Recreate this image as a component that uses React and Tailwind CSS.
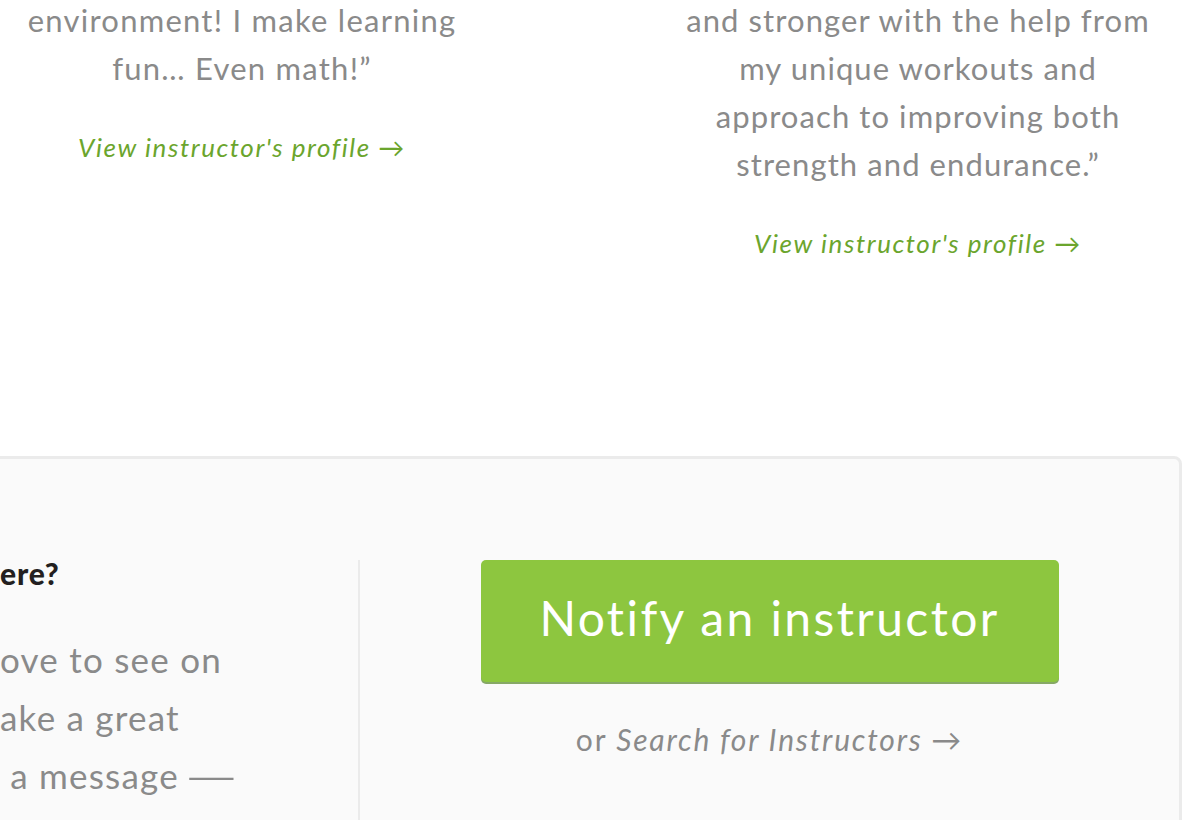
export default function App() {
  const Cut = ({ pre, post }) => (
    <div className="flex whitespace-nowrap">
      <span className="flex w-[97px] shrink-0 justify-end">
        <span>{pre}</span>
      </span>
      <span>{post}</span>
    </div>
  );
  return (
    <div className="w-[1194px] h-[820px] overflow-hidden bg-white font-['Lato',sans-serif] tracking-[0.05em]">
      <div className="flex items-start -mt-[4px]">
        <div className="w-[484px] shrink-0 text-center">
          <p className="text-[31px] leading-[48px] tracking-[0.04em] text-[#8a8a8a] whitespace-nowrap">
            environment! I make learning
            <br />
            fun… Even math!”
          </p>
          <a className="block mt-[39px] italic text-[26px] leading-[32px] tracking-[0.06em] text-[#6ba52d] whitespace-nowrap">
            View instructor's profile →
          </a>
        </div>
        <div className="ml-[176px] w-[516px] shrink-0 text-center">
          <p className="text-[31px] leading-[48px] tracking-[0.035em] text-[#8a8a8a] whitespace-nowrap">
            and stronger with the help from
            <br />
            my unique workouts and
            <br />
            approach to improving both
            <br />
            strength and endurance.”
          </p>
          <a className="block mt-[39px] italic text-[26px] leading-[32px] tracking-[0.06em] text-[#6ba52d] whitespace-nowrap">
            View instructor's profile →
          </a>
        </div>
      </div>

      <div className="mt-[197px] ml-[-100px] w-[1282px] h-[500px] shrink-0 border-[3px] border-[#ebebeb] rounded-[8px] bg-[#fafafa] pt-[101px] flex">
        <div className="w-[455px] shrink-0">
          <div className="text-[30px] leading-[26px] font-black text-[#231f20]">
            <Cut pre="Don't see your favorite instructor h" post="ere?" />
          </div>
          <div className="mt-[44px] text-[35px] leading-[58px] tracking-[0.035em] text-[#8a8a8a]">
            <Cut pre="Know an instructor you'd l" post="ove to see on" />
            <Cut pre="Skillshare? They would m" post="ake a great" />
            <Cut
              pre="addition, so send them"
              post={
                <>
                  {"\u00a0a message\u00a0"}
                  <span className="inline-block origin-left scale-x-[1.9] -ml-[4px]">—</span>
                </>
              }
            />
            <Cut pre="and we'll" post={"\u00a0ask them"} />
          </div>
        </div>
        <div className="w-[2px] shrink-0 bg-[#ebebeb]" />
        <div className="flex-1 flex flex-col items-center">
          <button className="w-[578px] h-[122px] pb-[6px] rounded-[5px] bg-[#8dc63f] shadow-[0_2px_0_#86a866] text-white text-[48px] tracking-[0.05em] leading-none flex items-center justify-center">
            Notify an instructor
          </button>
          <p className="mt-[41px] text-[30px] leading-[32px] tracking-[0.06em] text-[#8a8a8a] whitespace-nowrap">
            or <span className="italic">Search for Instructors →</span>
          </p>
        </div>
      </div>
    </div>
  );
}
